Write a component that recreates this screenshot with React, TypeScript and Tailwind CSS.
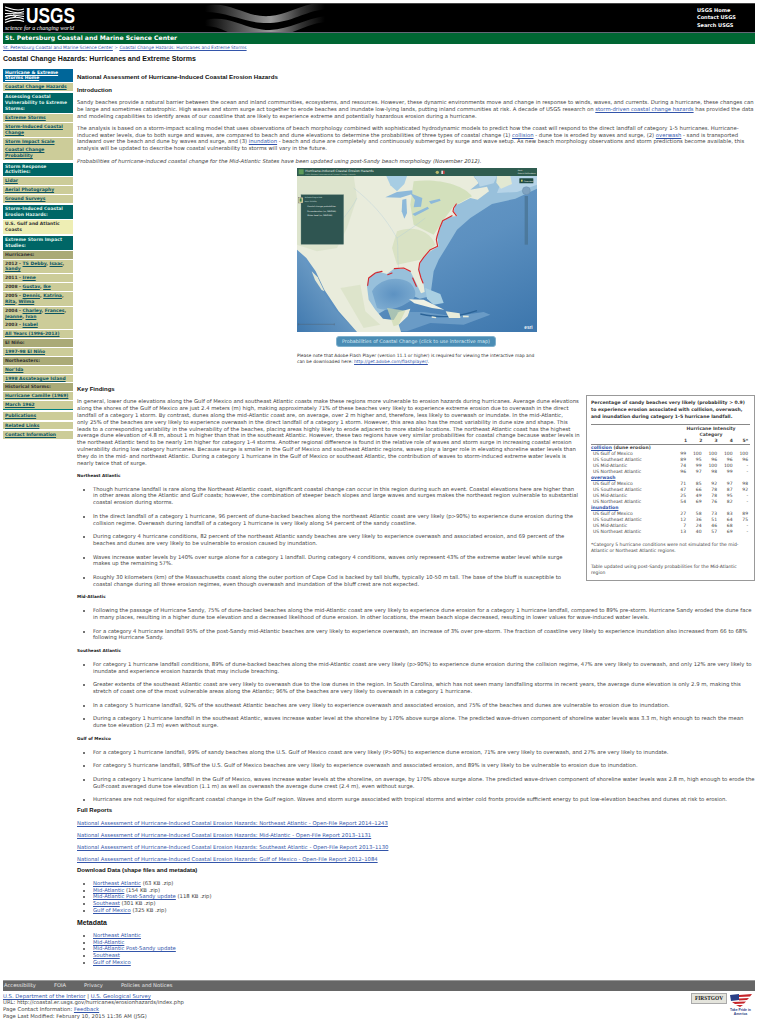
import React from 'react';

type NavRow = { kind: 'home' | 'head' | 'link' | 'current' | 'sub'; content: React.ReactNode; gapAfter?: boolean; spaced?: boolean };

const L: React.FC<{ children: React.ReactNode }> = ({ children }) => (
  <a href="#" className="text-[#3355aa] underline">{children}</a>
);

const N: React.FC<{ children: React.ReactNode }> = ({ children }) => (
  <a href="#" className="text-[#0b5563] underline">{children}</a>
);

const navRows: NavRow[] = [
  { kind: 'home', content: <a href="#" className="underline">Hurricane &amp; Extreme Storms Home</a> },
  { kind: 'link', content: <N>Coastal Change Hazards</N> },
  { kind: 'head', content: 'Assessing Coastal Vulnerability to Extreme Storms:' },
  { kind: 'link', content: <N>Extreme Storms</N> },
  { kind: 'link', content: <N>Storm-Induced Coastal Change</N> },
  { kind: 'link', content: <N>Storm Impact Scale</N> },
  { kind: 'link', content: <N>Coastal Change Probability</N> },
  { kind: 'head', content: 'Storm Response Activities:' },
  { kind: 'link', content: <N>Lidar</N> },
  { kind: 'link', content: <N>Aerial Photography</N> },
  { kind: 'link', content: <N>Ground Surveys</N> },
  { kind: 'head', content: 'Storm-Induced Coastal Erosion Hazards:' },
  { kind: 'current', content: 'U.S. Gulf and Atlantic Coasts' },
  { kind: 'head', content: 'Extreme Storm Impact Studies:' },
  { kind: 'sub', content: 'Hurricanes:' },
  { kind: 'link', content: <>2012 - <N>TS Debby</N>, <N>Isaac</N>, <N>Sandy</N></> },
  { kind: 'link', content: <>2011 - <N>Irene</N></> },
  { kind: 'link', content: <>2008 - <N>Gustav</N>, <N>Ike</N></> },
  { kind: 'link', content: <>2005 - <N>Dennis</N>, <N>Katrina</N>, <N>Rita</N>, <N>Wilma</N></> },
  { kind: 'link', content: <>2004 - <N>Charley</N>, <N>Frances</N>, <N>Jeanne</N>, <N>Ivan</N></> },
  { kind: 'link', content: <>2003 - <N>Isabel</N></> },
  { kind: 'link', content: <N>All Years (1996-2013)</N> },
  { kind: 'sub', content: 'El Niño:' },
  { kind: 'link', content: <N>1997-98 El Niño</N> },
  { kind: 'sub', content: 'Northeasters:' },
  { kind: 'link', content: <N>Nor'Ida</N> },
  { kind: 'link', content: <N>1998 Assateague Island</N> },
  { kind: 'sub', content: 'Historical Storms:' },
  { kind: 'link', content: <N>Hurricane Camille (1969)</N> },
  { kind: 'link', content: <N>March 1962</N>, gapAfter: true },
  { kind: 'link', content: <N>Publications</N>, spaced: true },
  { kind: 'link', content: <N>Related Links</N>, spaced: true },
  { kind: 'link', content: <N>Contact Information</N> },
];

const Sidebar: React.FC = () => (
  <nav className="w-[70px] shrink-0 mt-[0.5px] flex flex-col gap-[0.95px] font-['DejaVu_Sans',sans-serif] font-bold text-[4.5px] leading-[5.9px]">
    {navRows.map((row, i) => {
      const colors = {
        home: 'bg-[#006699] text-white',
        head: 'bg-[#006666] text-[#dff0e8] mt-[1.3px]',
        link: 'bg-[#cccc99] text-[#333]',
        current: 'bg-[#eeeeb4] text-[#333]',
        sub: 'bg-[#aaaa77] text-[#333]',
      };
      return (
        <div
          key={i}
          className={`${colors[row.kind]} px-[2px] py-[1px] ${row.gapAfter ? 'border-b border-[#008080] mb-[1px]' : ''} ${row.spaced ? 'mb-[0.8px]' : ''}`}
        >
          {row.content}
        </div>
      );
    })}
  </nav>
);

const UsgsLogo: React.FC = () => (
  <svg width="92" height="28" viewBox="0 0 92 28" className="shrink-0">
    <g stroke="#fff" fill="none" strokeWidth="1.1">
      <path d="M2 3 C7 4 12 8 21 5" />
      <path d="M2 6 C8 7 12 11 21 7.5" />
      <path d="M2 9.5 L21 10 M10 11 L21 12.5" />
      <path d="M2 13 C7 10 12 12 13 13" />
      <path d="M2 16 C8 13 14 12 21 15" />
      <path d="M2 18.5 C8 16 14 15 21 17.5" />
    </g>
    <text x="23" y="19" fill="#fff" fontFamily="'Liberation Sans', sans-serif" fontWeight="700" fontSize="22" textLength="49" lengthAdjust="spacingAndGlyphs">USGS</text>
    <text x="2" y="25.5" fill="#fff" fontFamily="'Liberation Serif', serif" fontStyle="italic" fontSize="5.2" textLength="69" lengthAdjust="spacingAndGlyphs">science for a changing world</text>
  </svg>
);

const HeaderWaves: React.FC = () => (
  <svg width="120" height="28" viewBox="0 0 120 28" className="shrink-0 ml-[110px]">
    <defs>
      <linearGradient id="wv" x1="0" x2="1" y1="0" y2="0">
        <stop offset="0" stopColor="#000" />
        <stop offset="0.3" stopColor="#555" />
        <stop offset="0.55" stopColor="#999" />
        <stop offset="0.8" stopColor="#333" />
        <stop offset="1" stopColor="#000" />
      </linearGradient>
    </defs>
    <path d="M0 2 C25 -4 40 14 65 12 C85 10 95 0 120 -2 L120 5 C98 8 88 18 65 19 C40 20 25 8 0 8 Z" fill="url(#wv)" />
    <path d="M0 16 C25 10 40 26 65 26 C85 25 100 15 120 12 L120 18 C100 20 88 32 65 32 L30 32 C20 26 10 22 0 22 Z" fill="url(#wv)" />
  </svg>
);

const CoastMap: React.FC = () => (
  <svg viewBox="0 0 720 492" className="block w-[240px] h-[164px]" preserveAspectRatio="none">
    <defs>
      <linearGradient id="sea" x1="0.2" x2="0.9" y1="0" y2="1">
        <stop offset="0" stopColor="#6f9fca" />
        <stop offset="0.55" stopColor="#5c90c0" />
        <stop offset="1" stopColor="#3f78ae" />
      </linearGradient>
      <linearGradient id="westSea" x1="1" x2="0" y1="0" y2="1">
        <stop offset="0" stopColor="#8eb6d6" />
        <stop offset="1" stopColor="#3f78ae" />
      </linearGradient>
      <radialGradient id="gulf" cx="0.5" cy="0.5" r="0.6">
        <stop offset="0" stopColor="#5d92c2" />
        <stop offset="1" stopColor="#7fadd1" />
      </radialGradient>
    </defs>
    <rect width="720" height="492" fill="url(#sea)" />
    <path d="M560 24 L720 24 L720 62 L655 92 L585 108 L520 150 L480 185 L450 235 L425 275 L410 310 L400 385 L368 392 L340 380 L240 440 L205 400 L200 330 L300 250 L470 70 Z" fill="#98c0db" />
    <path d="M620 24 L720 24 L720 50 L660 72 L600 75 Z" fill="#b6d4e8" />
    <path d="M225 370 C245 335 300 320 340 345 C362 370 360 392 335 402 C300 425 265 430 240 420 Z" fill="url(#gulf)" />
    <path d="M385 360 L430 378 L440 405 L410 410 L390 392 Z" fill="#a9cfe2" />
    <path d="M300 432 L380 432 L470 445 L560 432 L580 440 L500 470 L400 465 L330 490 L300 490 Z" fill="#6a9bc6" />
    <path d="M370 438 C420 448 470 452 540 428" fill="none" stroke="#2b6397" strokeWidth="4" />
    <path d="M2 250 L0 492 L180 492 L110 420 L60 345 L30 290 Z" fill="url(#westSea)" />
    <path d="M0 24 L530 24 L545 45 L520 65 L570 56 L576 70 L542 95 L520 90 L490 106 L475 112 L470 130 L481 144 L460 146 L436 160 L428 185 L420 205 L425 235 L400 250 L370 280 L365 310 L380 350 L383 372 L372 376 L355 340 L340 310 L320 303 L290 303 L270 318 L240 310 L215 330 L210 355 L215 395 L235 425 L258 452 L290 456 L305 432 L340 422 L332 445 L305 470 L312 492 L180 492 L125 430 L82 365 L56 310 L28 270 L0 245 Z" fill="#e9ecdc" />
    <path d="M0 24 L170 24 L180 90 L150 180 L120 240 L60 250 L0 230 Z" fill="#d9e2c9" opacity="0.8" />
    <path d="M350 40 C420 30 500 50 525 85 L470 115 L440 155 L410 200 L350 170 L340 110 Z" fill="#cbdcb2" opacity="0.75" />
    <path d="M300 190 C350 170 400 190 415 230 L370 275 L300 290 L285 240 Z" fill="#d2deb9" opacity="0.7" />
    <path d="M130 360 L190 350 L205 430 L250 470 L200 480 Z" fill="#d6dfbf" opacity="0.6" />
    <path d="M270 420 L325 428 L305 470 L290 475 Z" fill="#cfdcb0" opacity="0.7" />
    <path d="M600 24 L640 24 L645 48 L612 62 L598 44 Z" fill="#e2e8d2" />
    <path d="M44 310 L62 328 L82 370 L74 366 L54 336 Z" fill="#e4e8d6" />
    <path d="M336 394 L380 395 L442 425 L405 420 L352 406 Z" fill="#eef1e4" />
    <path d="M446 430 L488 436 L490 450 L456 450 Z" fill="#e8ecda" />
    <path d="M404 445 L418 447 L416 451 L404 449 Z" fill="#e8ecda" />
    <path d="M498 443 L515 443 L515 448 L498 448 Z" fill="#e8ecda" />
    <path d="M268 24 L330 24 L322 48 L300 70 L280 52 Z" fill="#a7cde3" />
    <path d="M530 24 L600 24 L590 46 L548 56 L545 44 Z" fill="#b8d5e7" />
    <g fill="#8db9da">
      <path d="M265 88 L300 72 L346 67 L346 78 L310 89 Z" />
      <path d="M316 95 L328 92 L330 135 L322 152 L314 130 Z" />
      <path d="M340 76 L376 90 L372 116 L350 118 L354 96 Z" />
      <path d="M346 138 L392 116 L396 122 L354 144 Z" />
      <path d="M396 100 L428 92 L431 98 L402 108 Z" />
    </g>
    <g fill="none" stroke="#a9c8dc" strokeWidth="1">
      <path d="M170 60 C220 100 260 140 300 210 C305 240 300 270 305 300" />
      <path d="M300 210 C330 190 360 170 385 150" />
      <path d="M180 90 C160 130 130 160 90 210" />
    </g>
    <g fill="none" stroke="#d5282e" strokeWidth="3.4" strokeLinejoin="round" strokeLinecap="round">
      <path d="M478 108 L470 120 L468 130 L478 143" />
      <path d="M465 143 L437 158 L428 180 L420 205 L418 215 L422 235 L400 245 L380 268 L368 285 L365 305 L372 330 L378 345" />
      <path d="M212 352 L215 330 L235 315 L255 310" />
      <path d="M272 320 L285 315" />
      <path d="M292 302 L320 300 L340 310" />
      <path d="M347 330 L358 355" />
    </g>
    <rect width="720" height="24" fill="#2f5c50" />
    <rect x="5" y="4" width="15" height="15" fill="#5d9b5a" />
    <text x="25" y="11" fill="#e8efe8" fontSize="9.5" fontFamily="'DejaVu Sans', sans-serif">Hurricane-Induced Coastal Erosion Hazards</text>
    <text x="25" y="20" fill="#b9cabf" fontSize="5.5" fontFamily="'DejaVu Sans', sans-serif">USGS National Assessment of Coastal Change Hazards</text>
    <circle cx="421" cy="13" r="5" fill="#b8b86a" />
    <rect x="433" y="8" width="5" height="10" fill="#ddd" /><rect x="438" y="8" width="5" height="10" fill="#c44" />
    <text x="662" y="9" fill="#e8efe8" fontSize="5.5" fontFamily="'DejaVu Sans', sans-serif">Start</text>
    <text x="662" y="19" fill="#e8efe8" fontSize="5.5" fontFamily="'DejaVu Sans', sans-serif">Data &amp; Publications</text>
    <rect x="667" y="31" width="42" height="15" rx="1" fill="#1f4a44" />
    <rect x="672" y="35" width="5" height="6" fill="#c9c66a" />
    <text x="680" y="41" fill="#e8efe8" fontSize="6" fontFamily="'DejaVu Sans', sans-serif">Overview</text>
    <circle cx="688" cy="68" r="12" fill="#7fa2c0" stroke="#5b7f9e" />
    <rect x="683" y="84" width="10" height="146" fill="#47708e" opacity="0.7" />
    <rect x="12" y="80" width="128" height="149" fill="#2f5551" stroke="#6f8a84" />
    <text x="23" y="89" fill="#dfe8e2" fontSize="5.5" fontFamily="'DejaVu Sans', sans-serif">Selected Layer List</text>
    <text x="23" y="103" fill="#dfe8e2" fontSize="5" fontFamily="'DejaVu Sans', sans-serif">Layer Visibility</text>
    <text x="31" y="117" fill="#eef3ef" fontSize="6" fontFamily="'DejaVu Sans', sans-serif">Coastal change probabilities</text>
    <text x="31" y="131" fill="#eef3ef" fontSize="6" fontFamily="'DejaVu Sans', sans-serif">Dune elevation (m, NAVD88)</text>
    <text x="31" y="145" fill="#eef3ef" fontSize="6" fontFamily="'DejaVu Sans', sans-serif">Water level (m, NAVD88)</text>
    <rect x="4" y="88" width="14" height="17" fill="#e1dca0" stroke="#556" />
    <rect x="8" y="91" width="6" height="10" fill="#3f7c54" />
    <path d="M4 469 L112 469 M4 466 V472 M112 466 V472" stroke="#555" strokeWidth="1" />
    <text x="682" y="482" fill="#f2f5f8" fontSize="14" fontWeight="700" fontFamily="'Liberation Sans', sans-serif">esri</text>
  </svg>
);

type BulletSection = { title: string; items: string[] };

const sections: BulletSection[] = [
  {
    title: 'Northeast Atlantic',
    items: [
      'Though hurricane landfall is rare along the Northeast Atlantic coast, significant coastal change can occur in this region during such an event. Coastal elevations here are higher than in other areas along the Atlantic and Gulf coasts; however, the combination of steeper beach slopes and large waves and surges makes the northeast region vulnerable to substantial coastal erosion during storms.',
      'In the direct landfall of a category 1 hurricane, 96 percent of dune-backed beaches along the northeast Atlantic coast are very likely (p>90%) to experience dune erosion during the collision regime. Overwash during landfall of a category 1 hurricane is very likely along 54 percent of the sandy coastline.',
      'During category 4 hurricane conditions, 82 percent of the northeast Atlantic sandy beaches are very likely to experience overwash and associated erosion, and 69 percent of the beaches and dunes are very likely to be vulnerable to erosion caused by inundation.',
      'Waves increase water levels by 140% over surge alone for a category 1 landfall. During category 4 conditions, waves only represent 43% of the extreme water level while surge makes up the remaining 57%.',
      'Roughly 30 kilometers (km) of the Massachusetts coast along the outer portion of Cape Cod is backed by tall bluffs, typically 10-50 m tall. The base of the bluff is susceptible to coastal change during all three erosion regimes, even though overwash and inundation of the bluff crest are not expected.',
    ],
  },
  {
    title: 'Mid-Atlantic',
    items: [
      'Following the passage of Hurricane Sandy, 75% of dune-backed beaches along the mid-Atlantic coast are very likely to experience dune erosion for a category 1 hurricane landfall, compared to 89% pre-storm. Hurricane Sandy eroded the dune face in many places, resulting in a higher dune toe elevation and a decreased likelihood of dune erosion. In other locations, the mean beach slope decreased, resulting in lower values for wave-induced water levels.',
      'For a category 4 hurricane landfall 95% of the post-Sandy mid-Atlantic beaches are very likely to experience overwash, an increase of 3% over pre-storm. The fraction of coastline very likely to experience inundation also increased from 66 to 68% following Hurricane Sandy.',
    ],
  },
  {
    title: 'Southeast Atlantic',
    items: [
      'For category 1 hurricane landfall conditions, 89% of dune-backed beaches along the mid-Atlantic coast are very likely (p>90%) to experience dune erosion during the collision regime, 47% are very likely to overwash, and only 12% are very likely to inundate and experience erosion hazards that may include breaching.',
      'Greater extents of the southeast Atlantic coast are very likely to overwash due to the low dunes in the region. In South Carolina, which has not seen many landfalling storms in recent years, the average dune elevation is only 2.9 m, making this stretch of coast one of the most vulnerable areas along the Atlantic; 96% of the beaches are very likely to overwash in a category 1 hurricane.',
      'In a category 5 hurricane landfall, 92% of the southeast Atlantic beaches are very likely to experience overwash and associated erosion, and 75% of the beaches and dunes are vulnerable to erosion due to inundation.',
      'During a category 1 hurricane landfall in the southeast Atlantic, waves increase water level at the shoreline by 170% above surge alone. The predicted wave-driven component of shoreline water levels was 3.3 m, high enough to reach the mean dune toe elevation (2.3 m) even without surge.',
    ],
  },
  {
    title: 'Gulf of Mexico',
    items: [
      'For a category 1 hurricane landfall, 99% of sandy beaches along the U.S. Gulf of Mexico coast are very likely (P>90%) to experience dune erosion, 71% are very likely to overwash, and 27% are very likely to inundate.',
      'For category 5 hurricane landfall, 98%of the U.S. Gulf of Mexico beaches are very likely to experience overwash and associated erosion, and 89% is very likely to be vulnerable to erosion due to inundation.',
      'During a category 1 hurricane landfall in the Gulf of Mexico, waves increase water levels at the shoreline, on average, by 170% above surge alone. The predicted wave-driven component of shoreline water levels was 2.8 m, high enough to erode the Gulf-coast averaged dune toe elevation (1.1 m) as well as overwash the average dune crest (2.4 m), even without surge.',
      'Hurricanes are not required for significant coastal change in the Gulf region. Waves and storm surge associated with tropical storms and winter cold fronts provide sufficient energy to put low-elevation beaches and dunes at risk to erosion.',
    ],
  },
];

const tableGroups = [
  {
    name: 'collision',
    extra: ' (dune erosion)',
    rows: [
      ['US Gulf of Mexico', '99', '100', '100', '100', '100'],
      ['US Southeast Atlantic', '89', '95', '96', '96', '96'],
      ['US Mid-Atlantic', '74', '99', '100', '100', '-'],
      ['US Northeast Atlantic', '96', '97', '98', '99', '-'],
    ],
  },
  {
    name: 'overwash',
    extra: '',
    rows: [
      ['US Gulf of Mexico', '71', '85', '92', '97', '98'],
      ['US Southeast Atlantic', '47', '66', '78', '87', '92'],
      ['US Mid-Atlantic', '25', '49', '78', '95', '-'],
      ['US Northeast Atlantic', '54', '69', '76', '82', '-'],
    ],
  },
  {
    name: 'inundation',
    extra: '',
    rows: [
      ['US Gulf of Mexico', '27', '58', '73', '83', '89'],
      ['US Southeast Atlantic', '12', '36', '51', '64', '75'],
      ['US Mid-Atlantic', '7', '24', '46', '68', '-'],
      ['US Northeast Atlantic', '13', '40', '57', '69', '-'],
    ],
  },
];

const numCol = 'w-[15.5px] text-right';

const ProbabilityTable: React.FC = () => (
  <aside className="float-right w-[169px] h-[186px] ml-[6px] mt-[-3px] border border-[#999] px-[4px] pt-[4px] text-[4.5px] leading-[6px]">
    <p className="font-bold text-[#333] text-[4.6px] leading-[6.7px] pb-[4px] border-b border-[#888]">
      Percentage of sandy beaches very likely (probability &gt; 0.9) to experience erosion associated with collision, overwash, and inundation during category 1-5 hurricane landfall.
    </p>
    <div className="flex justify-end border-b border-[#888] font-bold">
      <div className="w-[78px]">
        <p className="text-center mt-[1px]">Hurricane Intensity<br />Category</p>
        <div className="flex justify-end pr-[2px]">
          {['1', '2', '3', '4', '5*'].map((h) => (
            <span key={h} className={numCol}>{h}</span>
          ))}
        </div>
      </div>
    </div>
    {tableGroups.map((group) => (
      <div key={group.name}>
        <p className="font-bold"><L>{group.name}</L>{group.extra}</p>
        {group.rows.map((row, i) => (
          <div key={i} className="flex pl-[2px] pr-[2px]">
            <span className="flex-1">{row[0]}</span>
            {row.slice(1).map((v, j) => (
              <span key={j} className={numCol}>{v}</span>
            ))}
          </div>
        ))}
      </div>
    ))}
    <p className="mt-[7px]">*Category 5 hurricane conditions were not simulated for the mid-Atlantic or Northeast Atlantic regions.</p>
    <p className="mt-[10px]">Table updated using post-Sandy probabilities for the Mid-Atlantic region</p>
  </aside>
);

const reports = [
  'National Assessment of Hurricane-Induced Coastal Erosion Hazards: Northeast Atlantic - Open-File Report 2014–1243',
  'National Assessment of Hurricane-Induced Coastal Erosion Hazards: Mid-Atlantic - Open-File Report 2013–1131',
  'National Assessment of Hurricane-Induced Coastal Erosion Hazards: Southeast Atlantic - Open-File Report 2013–1130',
  'National Assessment of Hurricane-Induced Coastal Erosion Hazards: Gulf of Mexico - Open-File Report 2012–1084',
];

const downloads = [
  ['Northeast Atlantic', '(63 KB .zip)'],
  ['Mid-Atlantic', '(154 KB .zip)'],
  ['Mid-Atlantic Post-Sandy update', '(118 KB .zip)'],
  ['Southeast', '(301 KB .zip)'],
  ['Gulf of Mexico', '(325 KB .zip)'],
];

const sectionTitle = "font-['Liberation_Sans',sans-serif] font-bold text-[#111] text-[6px] leading-[7px]";

const App: React.FC = () => (
  <div className="bg-white h-[1024px] overflow-hidden px-[3px] pt-[3px] font-['DejaVu_Sans',sans-serif] text-[5.3px] leading-[6.8px] text-[#444]">
    <header>
      <div className="bg-black h-[29px] flex items-center border-t border-[#444]">
        <UsgsLogo />
        <HeaderWaves />
        <div className="ml-auto pr-[6px] w-[58px] shrink-0 font-bold text-white text-[5px] leading-[7.2px]">
          <div>USGS Home</div>
          <div>Contact USGS</div>
          <div>Search USGS</div>
        </div>
      </div>
      <div className="bg-[#006633] h-[12px] border-t border-[#667] flex items-center pl-[2px] font-bold text-white text-[6.1px]">
        St. Petersburg Coastal and Marine Science Center
      </div>
    </header>
    <p className="text-[4.43px] leading-[6px] mt-[1px] text-[#3355aa]">
      <a href="#" className="underline">St. Petersburg Coastal and Marine Science Center</a> &gt; <a href="#" className="underline">Coastal Change Hazards: Hurricanes and Extreme Storms</a>
    </p>
    <h1 className="font-['Liberation_Sans',sans-serif] font-bold text-[#111] text-[7px] leading-[9px] mt-[3px]">
      Coastal Change Hazards: Hurricanes and Extreme Storms
    </h1>
    <div className="flex gap-[4px] mt-[5px]">
      <Sidebar />
      <main className="flex-1 min-w-0 pt-[5px]">
        <h2 className="font-['Liberation_Sans',sans-serif] font-bold text-[#111] text-[6.2px] leading-[8px]">
          National Assessment of Hurricane-Induced Coastal Erosion Hazards
        </h2>
        <h3 className={`${sectionTitle} mt-[6px]`}>Introduction</h3>
        <p className="mt-[5px]">
          Sandy beaches provide a natural barrier between the ocean and inland communities, ecosystems, and resources. However, these dynamic environments move and change in response to winds, waves, and currents. During a hurricane, these changes can be large and sometimes catastrophic. High waves and storm surge act together to erode beaches and inundate low-lying lands, putting inland communities at risk. A decade of USGS research on <L>storm-driven coastal change hazards</L> has provided the data and modeling capabilities to identify areas of our coastline that are likely to experience extreme and potentially hazardous erosion during a hurricane.
        </p>
        <p className="mt-[5.5px]">
          The analysis is based on a storm-impact scaling model that uses observations of beach morphology combined with sophisticated hydrodynamic models to predict how the coast will respond to the direct landfall of category 1-5 hurricanes. Hurricane-induced water levels, due to both surge and waves, are compared to beach and dune elevations to determine the probabilities of three types of coastal change (1) <L>collision</L> - dune toe is eroded by waves and surge, (2) <L>overwash</L> - sand is transported landward over the beach and dune by waves and surge, and (3) <L>inundation</L> - beach and dune are completely and continuously submerged by surge and wave setup. As new beach morphology observations and storm predictions become available, this analysis will be updated to describe how coastal vulnerability to storms will vary in the future.
        </p>
        <p className="italic mt-[5.5px]">
          Probabilities of hurricane-induced coastal change for the Mid-Atlantic States have been updated using post-Sandy beach morphology (November 2012).
        </p>
        <div className="ml-[220px] w-[240px] mt-[4px]">
          <CoastMap />
          <div className="ml-[39px] mt-[4px] w-[160px] h-[11px] rounded-[3px] border border-[#7fb0cd] bg-[#4b8db5] text-[#dcebf4] text-[4.85px] leading-[9px] text-center whitespace-nowrap">
            Probabilities of Coastal Change (click to use interactive map)
          </div>
          <p className="mt-[6px] text-[4.4px] leading-[6px] text-[#333]">
            Please note that Adobe Flash Player (version 11.1 or higher) is required for viewing the interactive map and can be downloaded here: <L>http://get.adobe.com/flashplayer/</L>.
          </p>
        </div>

        <h3 className={`${sectionTitle} mt-[21px]`}>Key Findings</h3>
        <div className="mt-[5px]">
          <ProbabilityTable />
          <p>
            In general, lower dune elevations along the Gulf of Mexico and southeast Atlantic coasts make these regions more vulnerable to erosion hazards during hurricanes. Average dune elevations along the shores of the Gulf of Mexico are just 2.4 meters (m) high, making approximately 71% of these beaches very likely to experience extreme erosion due to overwash in the direct landfall of a category 1 storm. By contrast, dunes along the mid-Atlantic coast are, on average, over 2 m higher and, therefore, less likely to overwash or inundate. In the mid-Atlantic,<br />only 25% of the beaches are very likely to experience overwash in the direct landfall of a category 1 storm. However, this area also has the most variability in dune size and shape. This leads to a corresponding variability in the vulnerability of the beaches, placing areas highly likely to erode adjacent to more stable locations. The northeast Atlantic coast has the highest average dune elevation of 4.8 m, about 1 m higher than that in the southeast Atlantic. However, these two regions have very similar probabilities for coastal change because water levels in the northeast Atlantic tend to be nearly 1m higher for category 1-4 storms. Another regional difference is found in the relative role of waves and storm surge in increasing coastal erosion vulnerability during low category hurricanes. Because surge is smaller in the Gulf of Mexico and southeast Atlantic regions, waves play a larger role in elevating shoreline water levels than they do in the mid- and northeast Atlantic. During a category 1 hurricane in the Gulf of Mexico or southeast Atlantic, the contribution of waves to storm-induced extreme water levels is nearly twice that of surge.
          </p>
          {sections.map((section) => (
            <div key={section.title}>
              <h4 className="font-bold text-[#222] text-[4.2px] leading-[6px] mt-[6.2px]">{section.title}</h4>
              <ul className="list-disc pl-[16px] mt-[7px]">
                {section.items.map((item, i) => (
                  <li key={i} className="mb-[6.8px]">{item}</li>
                ))}
              </ul>
            </div>
          ))}
        </div>

        <h3 className={`${sectionTitle} mt-[-3px]`}>Full Reports</h3>
        <div className="flex flex-col gap-[5.2px] mt-[6px]">
          {reports.map((r) => (
            <p key={r}><L>{r}</L></p>
          ))}
        </div>
        <h3 className={`${sectionTitle} mt-[4px]`}>Download Data (shape files and metadata)</h3>
        <ul className="list-disc pl-[16px] mt-[6px]">
          {downloads.map(([name, size]) => (
            <li key={name}><L>{name}</L> {size}</li>
          ))}
        </ul>
        <h3 className="font-['Liberation_Sans',sans-serif] font-bold text-[#111] text-[6.9px] leading-[8px] mt-[5px]">Metadata</h3>
        <ul className="list-disc pl-[16px] mt-[5px]">
          {downloads.map(([name]) => (
            <li key={name}><L>{name}</L></li>
          ))}
        </ul>
      </main>
    </div>
    <Footer />
  </div>
);

const Footer: React.FC = () => (
  <footer className="mt-[14px]">
    <div className="bg-[#666] h-[11px] border-t border-[#999] flex items-center gap-[18px] pl-[1px] text-[#e8e8e8] text-[5.2px]">
      <span>Accessibility</span>
      <span>FOIA</span>
      <span>Privacy</span>
      <span>Policies and Notices</span>
    </div>
    <div className="flex justify-between pt-[2px] text-[#444] text-[5.3px] leading-[6.7px]">
      <div>
        <p><L>U.S. Department of the Interior</L> | <L>U.S. Geological Survey</L></p>
        <p>URL: http://coastal.er.usgs.gov/hurricanes/erosionhazards/index.php</p>
        <p>Page Contact Information: <L>Feedback</L></p>
        <p>Page Last Modified: February 10, 2015 11:36 AM (JSG)</p>
      </div>
      <div className="flex gap-[1px] items-start pr-[2px]">
        <div className="w-[36px] h-[11px] bg-[#e4e4dc] border border-[#aaa] flex items-center justify-center font-['Liberation_Serif',serif] font-bold text-[#222] text-[5.4px]">FIRSTGOV</div>
        <svg width="25" height="24" viewBox="0 0 25 24">
          <path d="M2 2 L11 1 L11 7 L3 8 Z" fill="#2b3f86" />
          <path d="M11 2 L24 1 L22 3.5 L11 4 Z M11 5.5 L21 5 L19 7 L11 7.5 Z M4 9 L18 8.5 L16 10.5 L7 11 Z M8 12 L15 12 L12 14 Z" fill="#c6252b" />
          <text x="12.5" y="18" textAnchor="middle" fontSize="3.4" fontWeight="700" fill="#2b3f86" fontFamily="'Liberation Sans', sans-serif">Take Pride in</text>
          <text x="12.5" y="22" textAnchor="middle" fontSize="3.4" fontWeight="700" fill="#2b3f86" fontFamily="'Liberation Sans', sans-serif">America</text>
        </svg>
      </div>
    </div>
  </footer>
);

export default App;
